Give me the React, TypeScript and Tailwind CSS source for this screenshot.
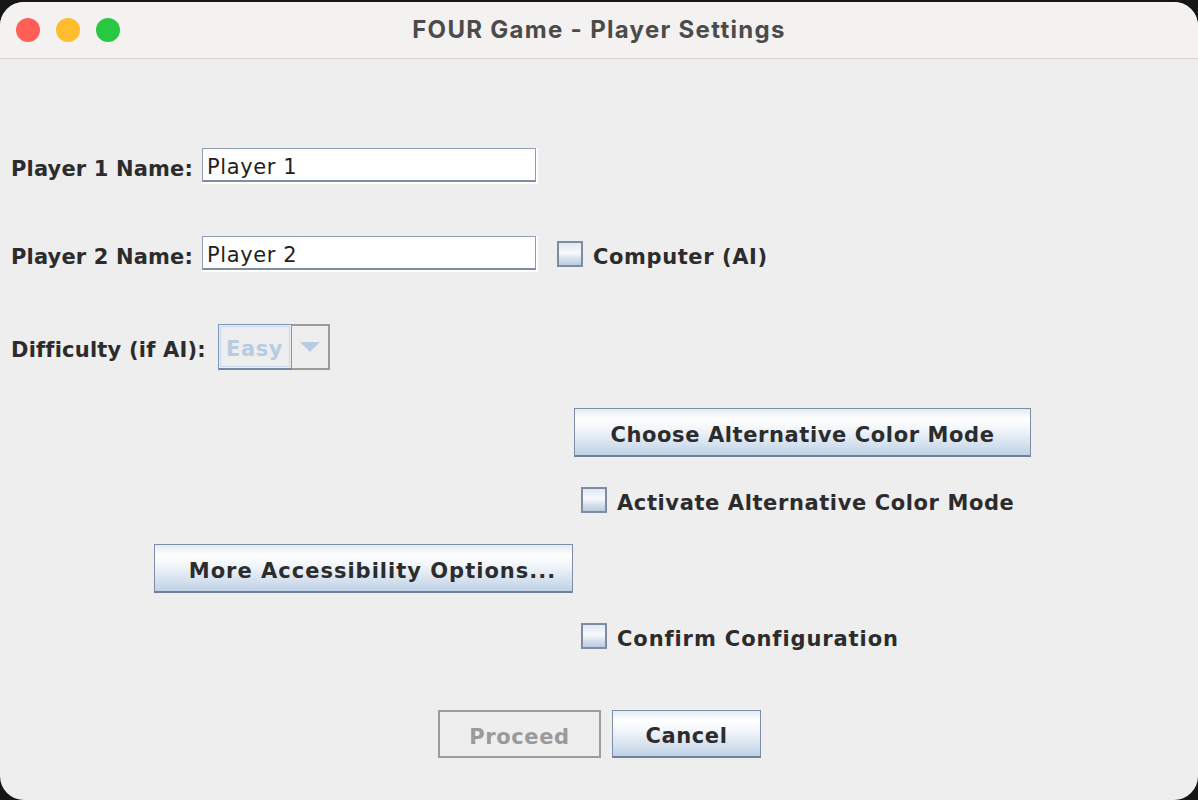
const btnFace =
  "bg-[linear-gradient(to_bottom,#e4ebf4_0%,#ffffff_22%,#f1f5fa_45%,#d6e2ef_75%,#bfd2e7_100%)] border border-[#7c8da4] border-b-2 border-b-[#6f8098]";

function Checkbox() {
  return (
    <div className="w-[26px] h-[26px] shrink-0 border-2 border-[#7d8ca1] bg-[linear-gradient(to_bottom,#dfe8f2_0%,#f7f9fc_45%,#d2deeb_75%,#bccde1_100%)]" />
  );
}

function TextField({ value }: { value: string }) {
  return (
    <div className="w-[336px] h-[36px] pr-[2px] pb-[2px] bg-white">
      <div className="h-full border border-[#8e9db1] border-b-2 border-b-[#7d8da3] bg-white flex items-center pl-[4px] pt-[6px] font-normal text-[#1f1f1f]">
        {value}
      </div>
    </div>
  );
}

export default function App() {
  return (
    <div className="w-[1198px] h-[800px] bg-[#161616] pt-[2px] font-['DejaVu_Sans',sans-serif]">
      <div className="w-full h-[798px] rounded-[24px] overflow-hidden bg-[#eeeeee] flex flex-col">
        {/* Title bar */}
        <div className="h-[57px] bg-[#f3f2f0] border-b border-[#d3d2d0] flex items-center relative shrink-0">
          <div className="flex gap-[16px] pl-[16px]">
            <div className="w-[24px] h-[24px] rounded-full bg-[#ff5f57]" />
            <div className="w-[24px] h-[24px] rounded-full bg-[#febc2e]" />
            <div className="w-[24px] h-[24px] rounded-full bg-[#28c840]" />
          </div>
          <div className="absolute inset-0 flex items-center justify-center text-[24px] font-bold text-[#4b4b4b] font-['Inter',sans-serif] tracking-[1.3px]">
            FOUR Game - Player Settings
          </div>
        </div>

        {/* Body */}
        <div className="flex flex-col text-[#2c2c2c] font-bold text-[21px] leading-none tracking-[0.6px]">
          <div className="mt-[89px] h-[36px] pl-[11px] flex items-center">
            <span className="w-[191px] pt-[6px] tracking-[0.15px]">Player 1 Name:</span>
            <TextField value="Player 1" />
          </div>

          <div className="mt-[52px] h-[36px] pl-[11px] flex items-center">
            <span className="w-[191px] pt-[6px] tracking-[0.15px]">Player 2 Name:</span>
            <TextField value="Player 2" />
            <div className="ml-[19px] flex items-center gap-[10px]">
              <Checkbox />
              <span className="pt-[6px]">Computer (AI)</span>
            </div>
          </div>

          <div className="mt-[52px] h-[46px] pl-[11px] flex items-center">
            <span className="w-[207px] pt-[6px] tracking-[0.2px]">Difficulty (if AI):</span>
            <div className="flex h-[46px]">
              <div className="w-[74px] h-full border border-[#7f96b3] border-b-2 border-b-[#7489a4] p-[1px]">
                <div className="h-full border border-[#c9d8ea] flex items-center pl-[5px] pt-[6px] text-[#b7cbe3]">
                  Easy
                </div>
              </div>
              <div className="w-[38px] h-full border-2 border-l-0 border-[#9b9b9b] flex items-center justify-center">
                <svg width="20" height="10" viewBox="0 0 20 10">
                  <path d="M0 0 L20 0 L10 10 Z" fill="#b7cde6" />
                </svg>
              </div>
            </div>
          </div>

          <div className="mt-[38px] ml-[574px] h-[49px]">
            <div className={`w-[457px] h-[49px] pt-[6px] flex items-center justify-center ${btnFace}`}>
              Choose Alternative Color Mode
            </div>
          </div>

          <div className="mt-[30px] ml-[581px] h-[26px] flex items-center gap-[10px]">
            <Checkbox />
            <span className="pt-[6px]">Activate Alternative Color Mode</span>
          </div>

          <div className="mt-[31px] ml-[154px] h-[49px]">
            <div className={`w-[419px] h-[49px] pt-[6px] pl-[18px] flex items-center justify-center tracking-[1px] ${btnFace}`}>
              More Accessibility Options...
            </div>
          </div>

          <div className="mt-[30px] ml-[581px] h-[26px] flex items-center gap-[10px]">
            <Checkbox />
            <span className="pt-[6px] tracking-[0.9px]">Confirm Configuration</span>
          </div>

          <div className="mt-[61px] ml-[438px] h-[48px] flex gap-[11px]">
            <div className="w-[163px] h-[48px] pt-[6px] border-2 border-[#9c9c9c] flex items-center justify-center text-[#9a9a9a]">
              Proceed
            </div>
            <div className={`w-[149px] h-[48px] pt-[6px] flex items-center justify-center ${btnFace}`}>
              Cancel
            </div>
          </div>
        </div>
      </div>
    </div>
  );
}
